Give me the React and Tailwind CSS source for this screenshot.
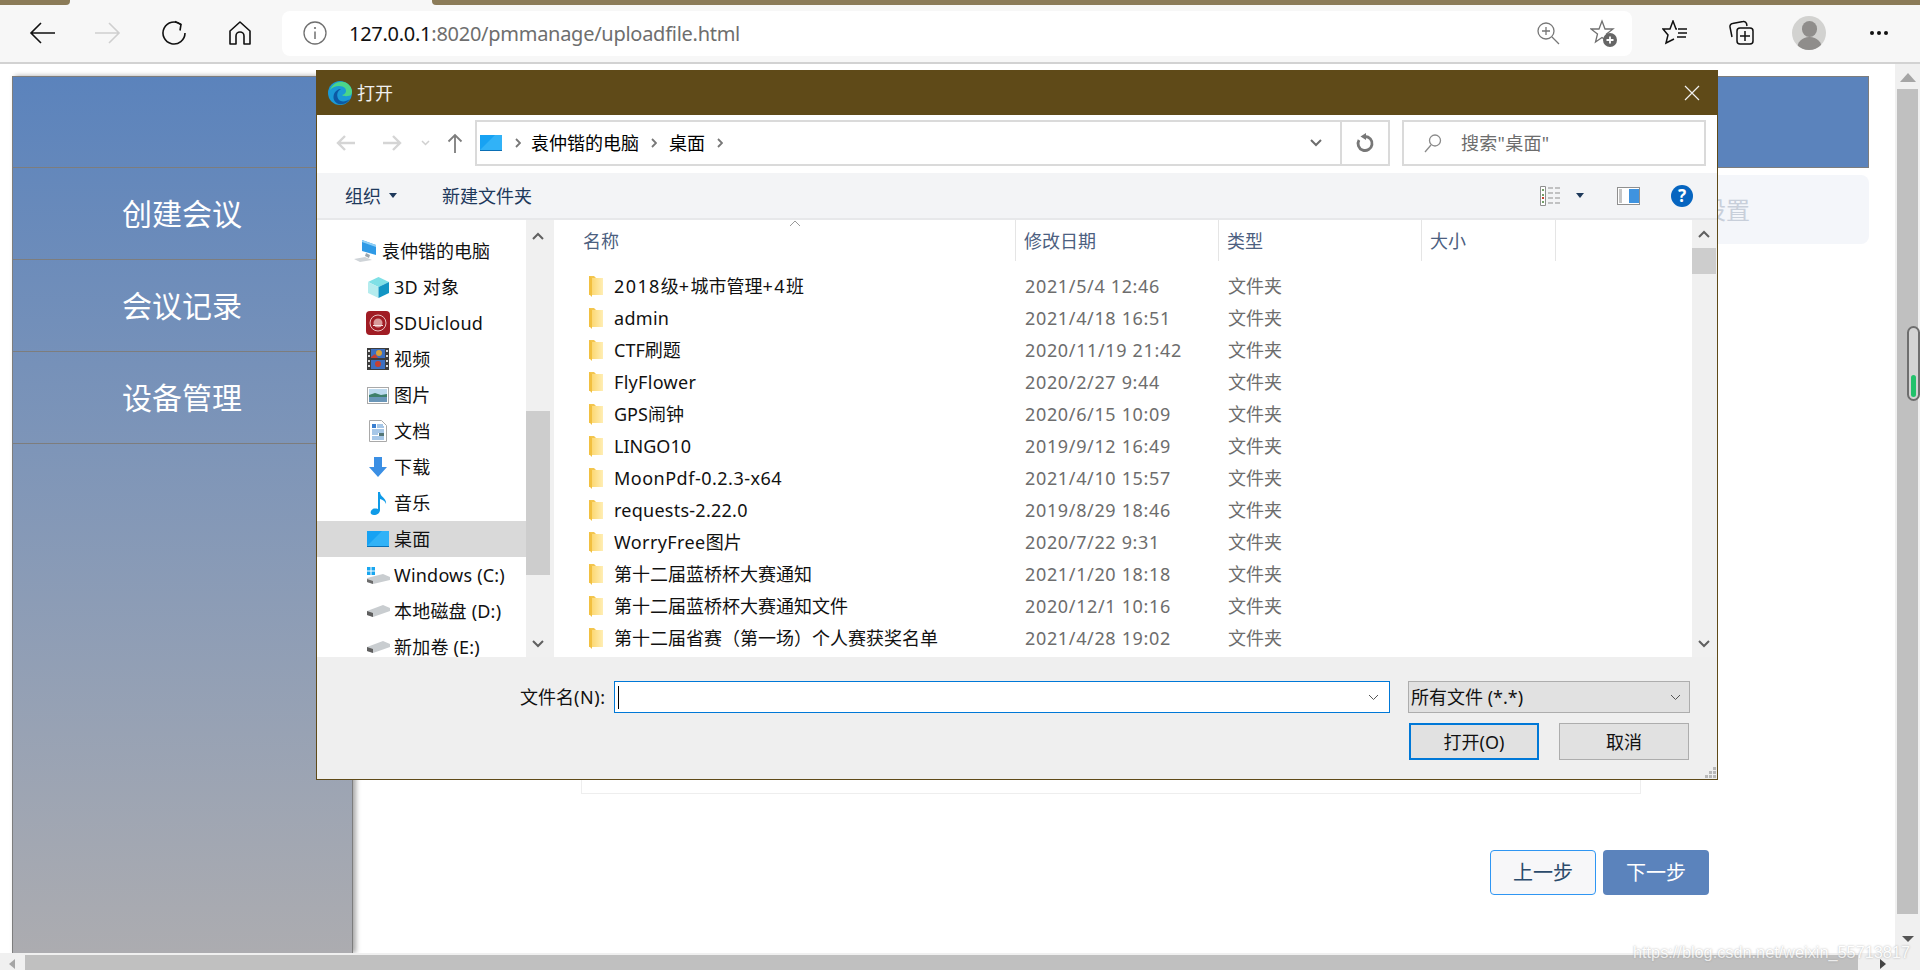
import React from "react";

const FONT = { fontFamily: '"Noto Sans","Noto Sans CJK SC",sans-serif' };

const files = [
  ["2018级+城市管理+4班", "2021/5/4 12:46", "tracking-[1.4px]"],
  ["admin", "2021/4/18 16:51", "tracking-[0.3px]"],
  ["CTF刷题", "2020/11/19 21:42", "tracking-[0px]"],
  ["FlyFlower", "2020/2/27 9:44", "tracking-[0.3px]"],
  ["GPS闹钟", "2020/6/15 10:09", "tracking-[0px]"],
  ["LINGO10", "2019/9/12 16:49", "tracking-[0px]"],
  ["MoonPdf-0.2.3-x64", "2021/4/10 15:57", "tracking-[0.5px]"],
  ["requests-2.22.0", "2019/8/29 18:46", "tracking-[0.25px]"],
  ["WorryFree图片", "2020/7/22 9:31", "tracking-[0.4px]"],
  ["第十二届蓝桥杯大赛通知", "2021/1/20 18:18", "tracking-[0px]"],
  ["第十二届蓝桥杯大赛通知文件", "2020/12/1 10:16", "tracking-[0px]"],
  ["第十二届省赛（第一场）个人赛获奖名单", "2021/4/28 19:02", "tracking-[0px]"],
];

function Mix({ s, cls }) {
  return s.split(/([\x00-\x7f]+)/).filter(Boolean).map((p, i) =>
    /^[\x00-\x7f]/.test(p) ? <span key={i} className={cls}>{p}</span> : <span key={i}>{p}</span>
  );
}

function Folder() {
  return (
    <svg width="14" height="21" viewBox="0 0 14 21" className="shrink-0">
      <defs>
        <linearGradient id="fld" x1="0" x2="1" y1="0" y2="0">
          <stop offset="0" stopColor="#fcd873" />
          <stop offset="1" stopColor="#ffeeb5" />
        </linearGradient>
      </defs>
      <path d="M0 0h5l2 2h7v17H0z" fill="#f3c64f" />
      <path d="M3 2h11v17L3 19z" fill="url(#fld)" />
      <path d="M0 0l3 2v19l-3-3z" fill="#f2c040" />
    </svg>
  );
}

const Ico = {
  pc: (
    <svg width="24" height="24" viewBox="0 0 24 24">
      <path d="M8 1l14 5v10L8 12z" fill="#2f9ae6" />
      <path d="M8 1l14 5v2L8 3z" fill="#8fd0f7" />
      <path d="M12 14l4 2-1 3-4-2z" fill="#9aa5ad" />
      <path d="M0 20l11-2 7 3-12 2z" fill="#cfd4d8" />
    </svg>
  ),
  cube: (
    <svg width="23" height="23" viewBox="0 0 23 23">
      <path d="M11.500 1L22 6l-10.500 5L1 6z" fill="#7fe0e6" />
      <path d="M1 6l10.500 5v11L1 17z" fill="#b5ecee" />
      <path d="M22 6l-10.500 5v11L22 17z" fill="#1295c4" />
    </svg>
  ),
  sdu: (
    <svg width="24" height="24" viewBox="0 0 24 24">
      <rect width="24" height="24" rx="4" fill="#a01c24" />
      <circle cx="12" cy="12" r="8" fill="none" stroke="#e9c4c4" strokeWidth="1" />
      <circle cx="12" cy="12" r="4.500" fill="#d99a9a" />
      <path d="M7 14h10v1H7z" fill="#f5e2e2" />
    </svg>
  ),
  video: (
    <svg width="22" height="22" viewBox="0 0 22 22">
      <rect width="22" height="22" fill="#3d3d3d" />
      <rect x="4" y="1" width="14" height="9" fill="#3c6fc0" />
      <rect x="4" y="12" width="14" height="9" fill="#3c6fc0" />
      <circle cx="12" cy="5" r="3" fill="#d8a13a" />
      <circle cx="11" cy="16" r="3" fill="#c7402f" />
      <path d="M4 9l4-3 3 4H4z" fill="#c7402f" />
      <path d="M1 2h2v2H1zM1 7h2v2H1zM1 12h2v2H1zM1 17h2v2H1zM19 2h2v2h-2zM19 7h2v2h-2zM19 12h2v2h-2zM19 17h2v2h-2z" fill="#ddd" />
    </svg>
  ),
  image: (
    <svg width="22" height="17" viewBox="0 0 22 17">
      <rect x=".5" y=".5" width="21" height="16" fill="#fff" stroke="#a9a9a9" />
      <rect x="2" y="2" width="18" height="6" fill="#bcd9ee" />
      <path d="M2 8l6-2 6 2 6-1v3H2z" fill="#3f7f6a" />
      <rect x="2" y="10" width="18" height="5" fill="#6a96b8" />
    </svg>
  ),
  doc: (
    <svg width="18" height="22" viewBox="0 0 18 22">
      <path d="M.5.500h12l5 5v16H.5z" fill="#fff" stroke="#a9a9a9" />
      <path d="M3 4h4v4H3z" fill="#3a7fd0" />
      <path d="M8 5h6M8 7h7M3 10h12M3 12h12M3 14h6M3 17h12M3 19h12" stroke="#4f8fd0" />
      <rect x="10" y="13" width="5" height="3" fill="#577" />
    </svg>
  ),
  down: (
    <svg width="20" height="20" viewBox="0 0 20 20">
      <path d="M6 0h8v10h5l-9 10L1 10h5z" fill="#3b8fe4" />
    </svg>
  ),
  music: (
    <svg width="17" height="23" viewBox="0 0 17 23">
      <path d="M8 0h2c0 5 7 6 6 12-1-3-3-4-6-5v11c0 3-3 5-6 5s-4-2-3-4 3-3 7-2z" fill="#0f9be8" />
    </svg>
  ),
  desk: (
    <svg width="22" height="16" viewBox="0 0 22 16">
      <rect width="22" height="16" fill="#17a2f3" />
      <path d="M0 15L15 0h7v15z" fill="#3db9f8" opacity=".7" />
      <rect y="15" width="22" height="1" fill="#0a6fb5" />
    </svg>
  ),
  win: (
    <svg width="23" height="18" viewBox="0 0 23 18">
      <path d="M0 1h3.500v3.500H0zM4.500 1H8v3.500H4.500zM0 5.500h3.500V9H0zM4.500 5.500H8V9H4.500z" fill="#18a6f0" />
      <path d="M0 12l16-4 7 3v3L6 18l-6-2z" fill="#c9cdd0" />
      <path d="M0 13l6 2v3l-6-2z" fill="#6c6c6c" />
    </svg>
  ),
  drive: (
    <svg width="23" height="12" viewBox="0 0 23 12">
      <path d="M0 6l16-6 7 3v3L6 12 0 10z" fill="#c9cdd0" />
      <path d="M0 6l6 2v4l-6-2z" fill="#5f5f5f" />
    </svg>
  ),
};

const nav = [
  [Ico.cube, "3D 对象"],
  [Ico.sdu, "SDUicloud"],
  [Ico.video, "视频"],
  [Ico.image, "图片"],
  [Ico.doc, "文档"],
  [Ico.down, "下载"],
  [Ico.music, "音乐"],
  [Ico.desk, "桌面", true],
  [Ico.win, "Windows (C:)"],
  [Ico.drive, "本地磁盘 (D:)"],
  [Ico.drive, "新加卷 (E:)"],
];

function Chevron({ up, color = "#606060" }) {
  return (
    <svg width="12" height="8" viewBox="0 0 12 8">
      <path d={up ? "M1 7l5-5 5 5" : "M1 1l5 5 5-5"} fill="none" stroke={color} strokeWidth="2" />
    </svg>
  );
}

function Crumb() {
  return (
    <svg width="6" height="10" viewBox="0 0 6 10">
      <path d="M1 1l4 4-4 4" fill="none" stroke="#777" strokeWidth="1.800" />
    </svg>
  );
}

function Edge() {
  return (
    <svg width="24" height="24" viewBox="0 0 24 24">
      <circle cx="12" cy="12" r="12" fill="#1b9ad6" />
      <path d="M2 9C4 2 14-2 20 3c4 3 5 8 3 11-1 1-7 2-9 0 4-1 5-4 3-7-3-3-11-3-15 2z" fill="#4bd58a" />
      <path d="M14 23c-6 1-10-4-8-10 1-3 4-5 7-5-4 2-5 7-2 11 2 2 7 2 11-1-2 3-5 5-8 5z" fill="#0c59a4" />
    </svg>
  );
}

function Dialog() {
  return (
    <div className="absolute left-[316px] top-[70px] flex h-[710px] w-[1402px] flex-col border border-[#5f4a18] bg-white" style={FONT}>
      <div className="flex h-[44px] items-center justify-between bg-[#5f4a18] pl-[11px] pr-[17px]">
        <div className="flex items-center gap-[5px]">
          <Edge />
          <span className="text-[18px] leading-none text-[#f0f0f0]">打开</span>
        </div>
        <svg width="16" height="16" viewBox="0 0 16 16">
          <path d="M1 1l14 14M15 1L1 15" stroke="#f2f2f2" strokeWidth="1.200" />
        </svg>
      </div>

      <div className="flex h-[58px] items-start bg-white pt-[5px]">
        <div className="flex h-[46px] w-[158px] items-center pl-[19px]">
          <svg width="20" height="18" viewBox="0 0 20 18" className="mr-[26px]"><path d="M9 2L2 9l7 7M2 9h17" fill="none" stroke="#d5d5d5" strokeWidth="2.400" /></svg>
          <svg width="20" height="18" viewBox="0 0 20 18" className="mr-[19px]"><path d="M11 2l7 7-7 7M18 9H1" fill="none" stroke="#d5d5d5" strokeWidth="2.400" /></svg>
          <svg width="9" height="6" viewBox="0 0 9 6" className="mr-[17px]"><path d="M1 1l3.500 3.500L8 1" fill="none" stroke="#d0d0d0" strokeWidth="1.500" /></svg>
          <svg width="16" height="20" viewBox="0 0 16 20"><path d="M8 20V2M1.500 8.500L8 2l6.500 6.500" fill="none" stroke="#7d7d7d" strokeWidth="1.800" /></svg>
        </div>
        <div className="flex h-[46px] w-[915px] items-center border-2 border-[#dadada] pl-[3px]">
          <div className="shrink-0">{Ico.desk}</div>
          <div className="ml-[13px]"><Crumb /></div>
          <span className="ml-[10px] text-[18px] leading-none text-black">袁仲锴的电脑</span>
          <div className="ml-[12px]"><Crumb /></div>
          <span className="ml-[12px] text-[18px] leading-none text-black">桌面</span>
          <div className="ml-[12px]"><Crumb /></div>
          <div className="ml-auto mr-[18px]"><Chevron color="#6d6d6d" /></div>
          <div className="flex h-full w-[48px] items-center justify-center border-l-2 border-[#dadada]">
            <svg width="20" height="20" viewBox="0 0 20 20">
              <path d="M10 3.500A7 7 0 1 1 4 7" fill="none" stroke="#777" strokeWidth="2.800" />
              <path d="M11 0L5.500 3.500 11 7z" fill="#777" />
            </svg>
          </div>
        </div>
        <div className="ml-[12px] flex h-[46px] w-[304px] items-center border-2 border-[#dadada] pl-[19px]">
          <svg width="20" height="20" viewBox="0 0 20 20"><circle cx="12" cy="7.500" r="5.500" fill="none" stroke="#8a8a8a" strokeWidth="1.300" /><path d="M8 12l-6 7" stroke="#8a8a8a" strokeWidth="1.300" /></svg>
          <span className="ml-[18px] text-[18px] leading-none tracking-[0.3px] text-[#6d6d6d]">搜索"桌面"</span>
        </div>
      </div>

      <div className="flex h-[47px] items-center border-b-2 border-[#e7e8ea] bg-[#f3f4f6] pl-[28px] text-[18px] text-[#1e395b]">
        <span className="leading-none">组织</span>
        <svg width="8" height="5" viewBox="0 0 8 5" className="ml-[8px]"><path d="M0 0h8L4 5z" fill="#1e395b" /></svg>
        <span className="ml-[45px] leading-none">新建文件夹</span>
        <svg width="22" height="20" viewBox="0 0 22 20" className="ml-auto">
          <path d="M.5.500h5v19h-5z" fill="#fff" stroke="#8f8f8f" />
          <path d="M2 3h2v2H2zM2 8h2v2H2zM2 15h2v2H2z" fill="#74a06a" /><path d="M2 11h2v2H2z" fill="#c7402f" />
          <path d="M8 2h14M8 7h14M8 12h14M8 17h14" stroke="#8f8f8f" strokeDasharray="5 2" />
        </svg>
        <svg width="8" height="5" viewBox="0 0 8 5" className="ml-[14px]"><path d="M0 0h8L4 5z" fill="#1e395b" /></svg>
        <svg width="23" height="18" viewBox="0 0 23 18" className="ml-[33px]">
          <rect x=".5" y=".5" width="22" height="17" fill="#fff" stroke="#8f8f8f" />
          <rect x="2" y="2" width="3" height="14" fill="#c5c5c5" /><rect x="12" y="2" width="10" height="14" fill="#3f93df" />
        </svg>
        <div className="ml-[31px] mr-[24px] flex h-[22px] w-[22px] items-center justify-center rounded-full bg-[#0665c0] text-[17px] font-bold leading-none text-white">?</div>
      </div>

      <div className="flex h-[437px] overflow-hidden">
        <div className="relative w-[209px] overflow-hidden bg-white pt-[13px]">
          <div className="flex h-[36px] items-center pl-[37px]">
            <div className="flex w-[28px] shrink-0 justify-start">{Ico.pc}</div>
            <span className="text-[18px] leading-none text-[#111]">袁仲锴的电脑</span>
          </div>
          {nav.map(([icon, label, sel]) => (
            <div key={label} className={`flex h-[36px] items-center pl-[49px] ${sel ? "bg-[#d9d9d9]" : ""}`}>
              <div className="flex w-[24px] shrink-0 justify-center">{icon}</div>
              <span className="ml-[4px] whitespace-nowrap text-[18px] leading-none tracking-[0.2px] text-[#111]">{label}</span>
            </div>
          ))}
        </div>
        <div className="flex w-[24px] flex-col items-center bg-[#f0f0f0]">
          <div className="flex h-[31px] items-center"><Chevron up /></div>
          <div className="mt-[160px] h-[164px] w-full bg-[#cdcdcd]" />
          <div className="mt-[65px]"><Chevron /></div>
        </div>
        <div className="w-[4px] bg-[#f0f0f0]" />
        <div className="w-[1138px] overflow-hidden bg-white">
          <div className="relative flex h-[41px] items-center text-[18px] leading-none text-[#4c6080]">
            <span className="w-[461px] pl-[29px]">名称</span>
            <span className="flex h-full w-[203px] items-center border-l border-[#e5e5e5] pl-[8px]">修改日期</span>
            <span className="flex h-full w-[203px] items-center border-l border-[#e5e5e5] pl-[8px]">类型</span>
            <span className="flex h-full w-[135px] items-center border-x border-[#e5e5e5] pl-[8px]">大小</span>
            <svg width="12" height="6" viewBox="0 0 12 6" className="absolute left-[235px] top-0"><path d="M1 6l5-5 5 5" fill="none" stroke="#9a9a9a" /></svg>
          </div>
          <div className="pt-[9px]">
            {files.map(([name, date, tr]) => (
              <div key={name} className="flex h-[32px] items-center text-[18px] leading-none">
                <div className="flex w-[471px] items-center pl-[35px]">
                  <Folder />
                  <span className="ml-[11px] whitespace-nowrap text-[#111]"><Mix s={name} cls={tr} /></span>
                </div>
                <span className="w-[203px] whitespace-nowrap tracking-[0.65px] text-[#6d6d6d]">{date}</span>
                <span className="text-[#6d6d6d]">文件夹</span>
              </div>
            ))}
          </div>
        </div>
        <div className="flex w-[25px] flex-col items-start bg-[#f0f0f0]">
          <div className="flex h-[28px] w-[24px] items-center justify-center"><Chevron up /></div>
          <div className="h-[26px] w-[24px] bg-[#cdcdcd]" />
          <div className="mt-[366px] flex w-[24px] justify-center"><Chevron /></div>
        </div>
      </div>

      <div className="relative flex-1 bg-[#efefef] pl-[203px] pt-[24px]">
        <div className="flex h-[32px] items-center">
          <span className="w-[94px] whitespace-nowrap text-[18px] leading-none text-[#111]"><Mix s="文件名(N):" cls="tracking-[0.6px]" /></span>
          <div className="flex h-[32px] w-[776px] items-center justify-between border border-[#0078d7] bg-white pl-[3px] pr-[10px]">
            <div className="h-[23px] w-px bg-black" />
            <svg width="11" height="7" viewBox="0 0 11 7"><path d="M1 1l4.500 4.500L10 1" fill="none" stroke="#555" /></svg>
          </div>
          <div className="ml-[18px] flex h-[32px] w-[282px] items-center justify-between border border-[#adadad] bg-[#e1e1e1] pl-[2px] pr-[8px]">
            <span className="text-[18px] leading-none text-[#111]">所有文件 (*.*)</span>
            <svg width="11" height="7" viewBox="0 0 11 7"><path d="M1 1l4.500 4.500L10 1" fill="none" stroke="#555" /></svg>
          </div>
        </div>
        <div className="ml-[889px] mt-[10px] flex gap-[20px]">
          <button className="flex h-[37px] w-[130px] items-center justify-center border-2 border-[#0078d7] bg-[#e1e1e1] text-[18px] leading-none text-[#111]">打开(O)</button>
          <button className="flex h-[37px] w-[130px] items-center justify-center border border-[#adadad] bg-[#e1e1e1] text-[18px] leading-none text-[#111]">取消</button>
        </div>
        <svg width="11" height="11" viewBox="0 0 11 11" className="absolute bottom-[1px] right-[1px]">
          <path d="M8 0h3v3H8zM4 4h3v3H4zM8 4h3v3H8zM0 8h3v3H0zM4 8h3v3H4zM8 8h3v3H8z" fill="#b8b8b8" />
        </svg>
      </div>
    </div>
  );
}

function TopBar() {
  return (
    <>
      <div className="flex h-[5px] justify-between bg-[#f7f7f7]">
        <div className="w-[70px] rounded-br-[4px] bg-[#8b7b58]" />
        <div className="w-[1488px] rounded-bl-[4px] bg-[#8b7b58]" />
      </div>
      <div className="flex h-[57px] items-center bg-[#f7f7f7] pb-[1px]">
        <svg width="26" height="26" viewBox="0 0 26 26" className="ml-[29px]"><path d="M12 3L2 13l10 10M2 13h24" fill="none" stroke="#111" strokeWidth="1.600" /></svg>
        <svg width="26" height="26" viewBox="0 0 26 26" className="ml-[40px]"><path d="M14 3l10 10-10 10M24 13H0" fill="none" stroke="#cfcfcf" strokeWidth="1.600" /></svg>
        <svg width="26" height="26" viewBox="0 0 26 26" className="ml-[40px]"><path d="M20 4.500A11 11 0 1 0 24 13" fill="none" stroke="#111" strokeWidth="1.600" /><path d="M14 1.500l6 3-1 6" fill="none" stroke="#111" strokeWidth="1.600" /></svg>
        <svg width="24" height="26" viewBox="0 0 24 26" className="ml-[41px]"><path d="M2 24V11L12 2l10 9v13h-6v-8a4 4 0 0 0-8 0v8z" fill="none" stroke="#111" strokeWidth="1.600" strokeLinejoin="round" /></svg>
        <div className="ml-[30px] flex h-[45px] w-[1350px] items-center rounded-[8px] bg-white pl-[21px] pr-[14px]">
          <svg width="24" height="24" viewBox="0 0 24 24"><circle cx="12" cy="12" r="11" fill="none" stroke="#707070" strokeWidth="1.300" /><path d="M12 10.500V18" stroke="#707070" strokeWidth="1.500" /><circle cx="12" cy="7" r="1.100" fill="#707070" /></svg>
          <span className="ml-[22px] mt-[1px] text-[20px] leading-none tracking-[-0.27px]" style={{ fontFamily: '"Noto Sans",sans-serif' }}>
            <span className="text-[#111]">127.0.0.1</span>
            <span className="text-[#6e6e6e]">:8020/pmmanage/uploadfile.html</span>
          </span>
          <svg width="24" height="24" viewBox="0 0 24 24" className="ml-auto"><circle cx="10" cy="10" r="8" fill="none" stroke="#777" strokeWidth="1.300" /><path d="M16 16l7 7M6 10h8M10 6v8" stroke="#777" strokeWidth="1.300" /></svg>
          <svg width="28" height="28" viewBox="0 0 28 28" className="ml-[30px]"><path d="M12 2l3 8h8l-6.500 5 2 8-6.500-4.500L5.500 23l2-8L1 10h8z" fill="none" stroke="#707070" strokeWidth="1.300" /><circle cx="20" cy="21" r="7" fill="#666" /><path d="M16.500 21h7M20 17.500v7" stroke="#fff" strokeWidth="1.800" /></svg>
        </div>
        <svg width="26" height="26" viewBox="0 0 26 26" className="ml-[30px]"><path d="M15 9h-1L11 1 8 9H1l5 6-2 8 8-4M16 9h9M16 13h9M15 17h9" fill="none" stroke="#111" strokeWidth="1.500" /></svg>
        <svg width="26" height="26" viewBox="0 0 26 26" className="ml-[41px]"><path d="M3 17L1 7a3 3 0 0 1 2.500-3.500L14 1.500a3 3 0 0 1 3.500 2L18 6" fill="none" stroke="#111" strokeWidth="1.500" /><rect x="8" y="8" width="16" height="16" rx="3" fill="#f7f7f7" stroke="#111" strokeWidth="1.500" /><path d="M11 16h10M16 11v10" stroke="#111" strokeWidth="1.500" /></svg>
        <div className="relative ml-[37px] h-[34px] w-[34px] overflow-hidden rounded-full bg-[#d2d2d0]">
          <div className="absolute left-[10px] top-[5px] h-[16px] w-[15px] rounded-full bg-[#8f8d8b]" />
          <div className="absolute left-[5px] top-[21px] h-[24px] w-[25px] rounded-full bg-[#8f8d8b]" />
        </div>
        <div className="ml-[44px] flex gap-[3px]">
          <div className="h-[4px] w-[4px] rounded-full bg-[#111]" />
          <div className="h-[4px] w-[4px] rounded-full bg-[#111]" />
          <div className="h-[4px] w-[4px] rounded-full bg-[#111]" />
        </div>
      </div>
      <div className="h-[2px] bg-[#d2d2d2]" />
    </>
  );
}

export default function App() {
  const menu = ["创建会议", "会议记录", "设备管理"];
  return (
    <div className="relative flex h-[970px] w-[1920px] flex-col overflow-hidden bg-white" style={FONT}>
      <TopBar />
      <div className="flex min-h-0 flex-1">
        <div className="flex flex-1 flex-col pl-[12px] pt-[12px]">
          <div className="flex flex-1">
            <div className="flex w-[341px] flex-col border-x border-[#7d7d7d] bg-gradient-to-b from-[#5b83bc] to-[#acacb0] shadow-[3px_0_5px_rgba(0,0,0,0.35)]">
              <div className="h-[92px] border-y border-[#7d7d7d]" />
              {menu.map((m) => (
                <div key={m} className="flex h-[92px] items-center border-b border-[#7d7d7d] pl-[109px] text-[30px] leading-none text-white">{m}</div>
              ))}
            </div>
            <div className="flex w-[1516px] flex-col">
              <div className="h-[92px] border-y border-r border-[#7d7d7d] bg-[#5b83bc]" />
              <div className="mt-[7px] flex h-[69px] items-center justify-end rounded-[8px] bg-[#f4f6fa] pr-[119px] text-[24px] leading-none text-[#c8cfda]">设置</div>
              <div className="ml-[228px] mt-[0px] h-[550px] w-[1060px] border border-[#eeeeee]" />
              <div className="ml-[1137px] mt-[56px] flex gap-[7px] text-[20px] leading-none">
                <button className="flex h-[45px] w-[106px] items-center justify-center rounded-[4px] border border-[#2f96f3] bg-[#f7f7f9] text-[#2b4a6b]">上一步</button>
                <button className="flex h-[45px] w-[106px] items-center justify-center rounded-[4px] bg-[#5b83bc] text-white">下一步</button>
              </div>
            </div>
          </div>
        </div>
        <div className="relative flex w-[25px] flex-col items-center bg-[#f0f0f0]">
          <svg width="16" height="9" viewBox="0 0 16 9" className="mt-[9px]"><path d="M8 0l8 9H0z" fill="#a5a5a5" /></svg>
          <div className="mt-[7px] h-[825px] w-[21px] bg-[#c0c0c0]" />
          <svg width="12" height="6" viewBox="0 0 12 6" className="mt-[22px]"><path d="M0 0h12L6 6z" fill="#555" /></svg>
          <div className="absolute left-[12px] top-[262px] h-[75px] w-[13px] rounded-l-full rounded-r-full border-2 border-[#6e6e6e] bg-[#d3d3d3] p-[1px]">
            <div className="ml-[1px] mt-[46px] h-[22px] w-[5px] rounded-full bg-[#22c16b]" />
          </div>
        </div>
      </div>
      <div className="flex h-[17px] items-end bg-[#f0f0f0]">
        <svg width="6" height="10" viewBox="0 0 6 10" className="mb-[1px] ml-[9px]"><path d="M6 0v10L0 5z" fill="#a5a5a5" /></svg>
        <div className="ml-[10px] h-[15px] w-[1833px] bg-[#c0c0c0]" />
        <svg width="6" height="10" viewBox="0 0 6 10" className="mb-[1px] ml-[22px]"><path d="M0 0v10L6 5z" fill="#444" /></svg>
      </div>
      <div className="absolute bottom-[6px] right-[10px] text-[16.300px] leading-[24px] text-white opacity-70 [text-shadow:0_0_2px_#888]" style={{ fontFamily: '"Liberation Sans",sans-serif' }}>https://blog.csdn.net/weixin_55713817</div>
      <Dialog />
    </div>
  );
}
